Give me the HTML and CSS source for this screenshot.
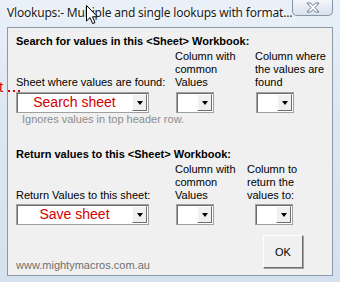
FILE: index.html
```html
<!DOCTYPE html>
<html lang="en">
<head>
    <meta charset="UTF-8">
    <meta name="viewport" content="width=device-width, initial-scale=1.0">
    <title>Vlookups</title>
    <link rel="stylesheet" href="styles.css">
</head>
<body>
    <div class="window">
        <div class="titlebar">
            <span class="title">Vlookups:- Multiple and single lookups with format...</span>
            <div class="close">
                <svg width="16" height="11" viewBox="0 0 16 11">
                    <path d="M2 1 H5.5 L8 3.6 L10.5 1 H14 L10 5.5 L14 10 H10.5 L8 7.4 L5.5 10 H2 L6 5.5 Z" fill="#fff" stroke="#6b7b90" stroke-width="1"/>
                </svg>
            </div>
        </div>

        <div class="client">
            <section class="group">
                <h2>Search for values in this &lt;Sheet&gt; Workbook:</h2>
                <div class="fields">
                    <div class="field">
                        <label>Sheet where values are found:</label>
                        <div class="combo wide"><span class="value">Search sheet</span><span class="arrow"></span></div>
                    </div>
                    <div class="field">
                        <label>Column with<br>common<br>Values</label>
                        <div class="combo small"><span class="value"></span><span class="arrow"></span></div>
                    </div>
                    <div class="field">
                        <label>Column where<br>the values are<br>found</label>
                        <div class="combo small"><span class="value"></span><span class="arrow"></span></div>
                    </div>
                </div>
                <p class="note">Ignores values in top header row.</p>
            </section>

            <section class="group second">
                <h2>Return values to this &lt;Sheet&gt; Workbook:</h2>
                <div class="fields">
                    <div class="field">
                        <label>Return Values to this sheet:</label>
                        <div class="combo wide"><span class="value">Save sheet</span><span class="arrow"></span></div>
                    </div>
                    <div class="field">
                        <label>Column with<br>common<br>Values</label>
                        <div class="combo small"><span class="value"></span><span class="arrow"></span></div>
                    </div>
                    <div class="field shifted">
                        <label>Column to<br>return the<br>values to:</label>
                        <div class="combo small"><span class="value"></span><span class="arrow"></span></div>
                    </div>
                </div>
            </section>

            <div class="footer">
                <span class="site">www.mightymacros.com.au</span>
                <button class="ok">OK</button>
            </div>
        </div>

        <!-- bits of the sheet behind the dialog -->
        <div class="behind">t<span class="dots"></span></div>

        <svg class="pointer" width="13" height="20" viewBox="0 0 13 20">
            <path d="M0.5 0.5 V16 L4 12.6 L6.6 18.6 L9 17.6 L6.5 11.8 H11.5 Z" fill="#fff" stroke="#000" stroke-width="1"/>
        </svg>
    </div>
</body>
</html>
```

FILE: styles.css
```css
body {
    margin: 0;
    width: 340px;
    height: 282px;
    overflow: hidden;
    font-family: 'Liberation Sans', Arial, sans-serif;
    font-size: 11px;
    color: #000;
}

.window {
    position: relative;
    width: 340px;
    height: 282px;
    box-sizing: border-box;
    padding: 0 7px;
    background: linear-gradient(180deg, #e9f0f8 0%, #dde7f2 40%, #d5e1ee 100%);
}

.titlebar {
    height: 27px;
    display: flex;
    align-items: flex-start;
    justify-content: space-between;
}

.title {
    font-family: 'Noto Sans', 'Liberation Sans', sans-serif;
    font-size: 12px;
    letter-spacing: -0.2px;
    line-height: 16px;
    margin-top: 5px;
    color: #1c1c1c;
    text-shadow: 0 0 6px #fff, 0 0 3px #fff;
    white-space: nowrap;
}

.close {
    width: 41px;
    height: 16px;
    box-sizing: border-box;
    border: 1px solid #8694a8;
    border-top: none;
    border-radius: 0 0 5px 5px;
    background: linear-gradient(180deg, #f4f7fb 0%, #e4ebf4 50%, #d8e2ee 100%);
    display: flex;
    align-items: center;
    justify-content: center;
}

.client {
    height: 249px;
    box-sizing: border-box;
    border: 1px solid #8c99a8;
    background-color: #f0f0f0;
    padding: 6px 8px 0;
    overflow: hidden;
}

h2 {
    margin: 0;
    font-size: 11px;
    line-height: 14px;
    font-weight: bold;
    white-space: nowrap;
}

.fields {
    display: grid;
    grid-template-columns: 159px 80px 70px;
    align-items: end;
    margin-top: 2px;
}

.field {
    display: flex;
    flex-direction: column;
    align-items: flex-start;
}

.field label {
    line-height: 13px;
    margin-bottom: 3px;
    white-space: nowrap;
}

.second .field label {
    margin-bottom: 2px;
}

.second .fields {
    grid-template-columns: 159px 72px 78px;
}

.second .shifted .combo {
    margin-left: 8px;
}

.combo {
    height: 21px;
    box-sizing: border-box;
    display: flex;
    background: #fff;
    border: 1px solid #a0a0a0;
    box-shadow: inset 1px 1px 0 #6d6d6d;
}

.combo.wide {
    width: 133px;
}

.combo.small {
    width: 38px;
    margin-left: 1px;
}

.value {
    flex: 1;
    text-align: center;
    font-size: 14px;
    line-height: 19px;
    color: #d20000;
}

.arrow {
    width: 15px;
    margin: 1px 1px 1px 0;
    box-sizing: border-box;
    background: #f0f0f0;
    border-top: 1px solid #fff;
    border-left: 1px solid #fff;
    border-right: 1px solid #6d6d6d;
    border-bottom: 1px solid #6d6d6d;
    display: flex;
    align-items: center;
    justify-content: center;
}

.arrow::after {
    content: '';
    border-left: 3.5px solid transparent;
    border-right: 3.5px solid transparent;
    border-top: 4px solid #000;
}

.note {
    margin: 0 0 21px 6px;
    line-height: 13px;
    color: #8d8d8d;
}

.footer {
    display: flex;
    justify-content: space-between;
    align-items: flex-end;
    margin-top: 10px;
}

.site {
    line-height: 13px;
    margin-bottom: -4px;
    color: #6f6f6f;
}

.ok {
    width: 40px;
    height: 33px;
    margin-right: 21px;
    padding: 0;
    font-family: 'Liberation Sans', Arial, sans-serif;
    font-size: 11px;
    color: #000;
    background: #f0f0f0;
    border-top: 1px solid #fff;
    border-left: 1px solid #fff;
    border-right: 1px solid #6d6d6d;
    border-bottom: 1px solid #6d6d6d;
    box-shadow: 1px 1px 0 #a0a0a0;
}

.behind {
    position: absolute;
    left: -1px;
    top: 79px;
    font-size: 15px;
    line-height: 15px;
    color: #e00000;
}

.behind .dots {
    position: absolute;
    left: 9px;
    top: 11px;
    width: 14px;
    height: 2px;
    background: repeating-linear-gradient(90deg, #e00000 0 2px, transparent 2px 5px);
}

.pointer {
    position: absolute;
    left: 86px;
    top: 5px;
}
```
